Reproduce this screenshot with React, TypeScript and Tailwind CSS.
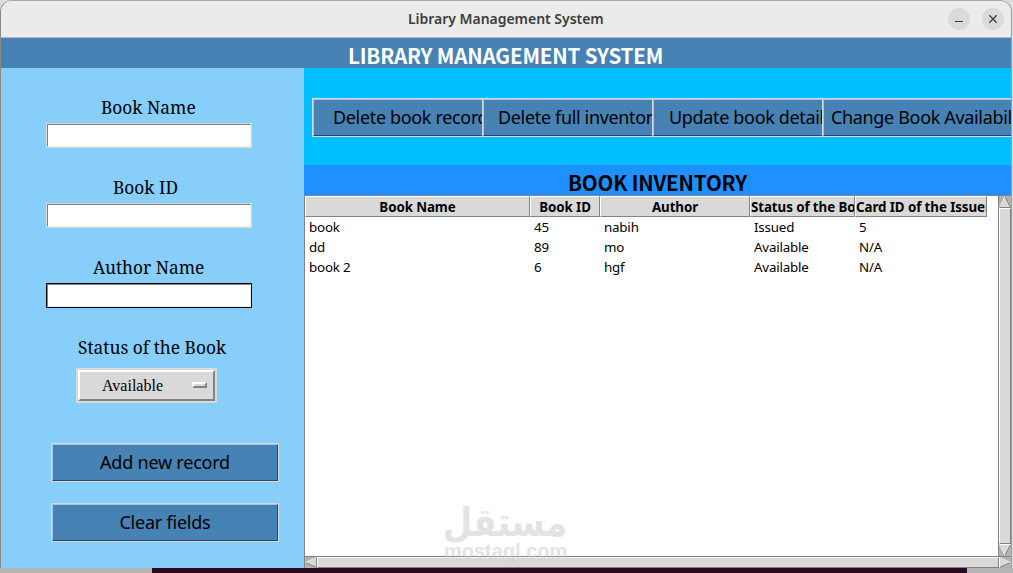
import clsx from 'clsx'

interface Book {
  name: string
  id: string
  author: string
  status: string
  card: string
}

const books: Book[] = [
  { name: 'book', id: '45', author: 'nabih', status: 'Issued', card: '5' },
  { name: 'dd', id: '89', author: 'mo', status: 'Available', card: 'N/A' },
  { name: 'book 2', id: '6', author: 'hgf', status: 'Available', card: 'N/A' },
]

const columns = 'grid grid-cols-[225px_70px_150px_105px_132px]'

function TitleBar() {
  return (
    <div className="flex h-[37px] shrink-0 items-center rounded-t-[11px] border-b border-[#b8b8b8] bg-[#ebebeb] pl-[407px] pr-[7px]">
      <span className="w-[196px] whitespace-nowrap font-['Noto_Sans'] text-[14px] font-semibold leading-5 tracking-[-0.03px] text-[#3d3d3d]">
        Library Management System
      </span>
      <div className="ml-auto flex gap-3">
        <button className="flex size-[22px] items-center justify-center rounded-full bg-[#dadada]">
          <svg width="22" height="22" viewBox="0 0 22 22">
            <path d="M7 13.5h8" stroke="#3d3d3d" fill="none" />
          </svg>
        </button>
        <button className="flex size-[22px] items-center justify-center rounded-full bg-[#dadada]">
          <svg width="22" height="22" viewBox="0 0 22 22">
            <path d="M7.3 7.3l7.4 7.4M14.7 7.3l-7.4 7.4" stroke="#3d3d3d" strokeWidth="1.3" fill="none" />
          </svg>
        </button>
      </div>
    </div>
  )
}

function FieldLabel({ text, className }: { text: string; className: string }) {
  return (
    <label
      className={clsx(
        "flex h-[26px] items-center whitespace-nowrap font-['Noto_Serif','DejaVu_Serif_Condensed','DejaVu_Serif',serif] text-[18.67px] text-black",
        className,
      )}
    >
      <span className="origin-left scale-x-[.93]">{text}</span>
    </label>
  )
}

function Entry({ focused = false }: { focused?: boolean }) {
  return (
    <div className={clsx('ml-[45px] h-[25px] w-[206px] border', focused ? 'border-black' : 'border-[#d9d9d9]')}>
      <input className="block h-full w-full border border-t-[#828282] border-l-[#828282] border-r-[#ececec] border-b-[#ececec] bg-white outline-none" />
    </div>
  )
}

function SideButton({ text }: { text: string }) {
  return (
    <button className="ml-[50px] block h-[39px] w-[228px] border border-[#d9d9d9]">
      <span className="flex h-full items-center justify-center border border-t-[#a5bef5] border-l-[#a5bef5] border-r-[#27486a] border-b-[#27486a] bg-[#4682b4] font-['Noto_Sans'] text-[18px] tracking-[-0.22px] text-black">
        {text}
      </span>
    </button>
  )
}

function Sidebar() {
  return (
    <div className="w-[303px] shrink-0 bg-[#87cefa] pt-[26px]">
      <FieldLabel text="Book Name" className="pl-[100px]" />
      <div className="mt-[3px]">
        <Entry />
      </div>
      <FieldLabel text="Book ID" className="mt-[26px] pl-[112px]" />
      <div className="mt-[3px]">
        <Entry />
      </div>
      <FieldLabel text="Author Name" className="mt-[26px] pl-[92px]" />
      <div className="mt-[3px]">
        <Entry focused />
      </div>
      <FieldLabel text="Status of the Book" className="mt-[26px] pl-[77px]" />

      <div className="mt-[8px] ml-[75px] h-[35px] w-[141px] border-2 border-[#d9d9d9]">
        <button className="flex h-full w-full items-center border-2 border-t-white border-l-white border-r-[#828282] border-b-[#828282] bg-[#d9d9d9] pl-[22px] font-['Liberation_Serif'] text-[16px] leading-5 text-black">
          <span>Available</span>
          <span className="mt-[-2px] mr-[6px] ml-auto h-[6px] w-[15px] border-2 border-t-white border-l-white border-r-[#828282] border-b-[#828282] bg-[#d9d9d9]" />
        </button>
      </div>

      <div className="mt-10">
        <SideButton text="Add new record" />
      </div>
      <div className="mt-[21px]">
        <SideButton text="Clear fields" />
      </div>
    </div>
  )
}

function ToolButton({ text, pad }: { text: string; pad: string }) {
  return (
    <button className="h-[39px] w-[170px] shrink-0 overflow-hidden border-y border-l border-[#d9d9d9]">
      <span
        className={clsx(
          "flex h-full items-center overflow-hidden whitespace-nowrap border-t border-b border-l border-t-[#a5bef5] border-l-[#a5bef5] border-b-[#27486a] bg-[#4682b4] font-['Noto_Sans'] text-[18px] tracking-[-0.34px] text-black",
          pad,
        )}
      >
        {text}
      </span>
    </button>
  )
}

function HeaderCell({ text, left = false }: { text: string; left?: boolean }) {
  return (
    <div
      className={clsx(
        'flex h-[21px] items-center overflow-hidden whitespace-nowrap border border-t-white border-l-white border-r-[#828282] border-b-[#828282] bg-[#d9d9d9] font-bold tracking-[-0.08px]',
        left ? 'justify-start' : 'justify-center',
      )}
    >
      {text}
    </div>
  )
}

function Arrow({ points, light }: { points: string; light: string }) {
  return (
    <svg width="12" height="12" viewBox="0 0 12 12" className="shrink-0 bg-[#b3b3b3]">
      <polygon points={points} fill="#d9d9d9" stroke="#828282" />
      <path d={light} stroke="#fff" fill="none" />
    </svg>
  )
}

function Inventory() {
  return (
    <div className="flex min-h-0 flex-1 flex-col border-t border-l border-[#828282] bg-white">
      <div className="flex min-h-0 flex-1">
        <div className="flex-1 overflow-hidden font-['Noto_Sans'] text-[13.33px] leading-5 text-black">
          <div className={columns}>
            <HeaderCell text="Book Name" />
            <HeaderCell text="Book ID" />
            <HeaderCell text="Author" />
            <HeaderCell text="Status of the Book" left />
            <HeaderCell text="Card ID of the Issuer" left />
          </div>
          {books.map((book) => (
            <div key={book.id} className={clsx(columns, 'h-5 tracking-[-0.18px] [&>span]:pl-1')}>
              <span>{book.name}</span>
              <span>{book.id}</span>
              <span>{book.author}</span>
              <span>{book.status}</span>
              <span>{book.card}</span>
            </div>
          ))}
        </div>
        {/* vertical scrollbar */}
        <div className="flex w-[13px] shrink-0 flex-col border-l border-[#828282] bg-[#b3b3b3]">
          <Arrow points="6,0.5 0.5,11.5 11.5,11.5" light="M6 .5L.5 11.5" />
          <div className="flex-1 border border-t-white border-l-white border-r-[#828282] border-b-[#828282] bg-[#d9d9d9]" />
          <Arrow points="0.5,0.5 11.5,0.5 6,11.5" light="M11.5 .5H.5L6 11.5" />
        </div>
      </div>
      {/* horizontal scrollbar */}
      <div className="flex h-[12px] shrink-0 border-t border-[#828282] bg-[#b3b3b3]">
        <Arrow points="0.5,5.5 11.5,0.5 11.5,10.5" light="M.5 5.5L11.5 .5" />
        <div className="flex-1 border border-t-white border-l-white border-r-[#828282] border-b-[#828282] bg-[#d9d9d9]" />
        <Arrow points="0.5,0.5 11.5,5.5 0.5,10.5" light="M.5 10.5V.5L11.5 5.5" />
      </div>
    </div>
  )
}

function Watermark() {
  return (
    <div className="pointer-events-none absolute top-[504px] left-[444px] flex w-[123px] flex-col whitespace-nowrap text-[#c8c8c8] opacity-50">
      <div dir="rtl" className="h-[37px] origin-right scale-x-[.85] font-['DejaVu_Sans'] text-[40px] font-bold leading-[37px]">
        مستقل
      </div>
      <div className="font-['Liberation_Sans'] text-[20px] font-bold leading-[20px]">mostaql.com</div>
    </div>
  )
}

export default function App() {
  return (
    <div className="relative flex h-[573px] w-[1013px] flex-col overflow-hidden bg-[#dedede]">
      <div className="flex h-[568px] w-[1012px] flex-col rounded-t-[12px] border-t border-r border-l border-t-[#a8a8a8] border-r-[#a09c98] border-l-[#8e8b87]">
        <TitleBar />
        <div className="flex h-[30px] shrink-0 items-center bg-[#4682b4] pt-[5px] pl-[347px]">
          <h1 className="whitespace-nowrap font-['Noto_Sans_CJK_JP',sans-serif] text-[20.6px] font-bold leading-[25px] tracking-[-0.17px] text-white">
            LIBRARY MANAGEMENT SYSTEM
          </h1>
        </div>
        <div className="flex min-h-0 flex-1">
          <Sidebar />
          <div className="flex min-w-0 flex-1 flex-col">
            <div className="flex h-[97px] shrink-0 overflow-hidden bg-[#00bfff] pt-[30px] pl-2">
              <ToolButton text="Delete book record" pad="pl-[19px]" />
              <ToolButton text="Delete full inventory" pad="pl-[14px]" />
              <ToolButton text="Update book details" pad="pl-[15px]" />
              <div className="flex w-[190px] shrink-0 [&>button]:w-full">
                <ToolButton text="Change Book Availability" pad="pl-[7px]" />
              </div>
            </div>
            <div className="flex h-[30px] shrink-0 items-center justify-center bg-[#1e90ff] pt-[5px]">
              <h2 className="whitespace-nowrap font-['Noto_Sans_CJK_JP',sans-serif] text-[20.6px] font-bold leading-[25px] tracking-[-0.17px] text-black">
                BOOK INVENTORY
              </h2>
            </div>
            <Inventory />
          </div>
        </div>
      </div>
      <div className="flex h-[5px] bg-[#b5b5b5] pl-[152px]">
        <div className="w-[815px] bg-[#2c0720]" />
      </div>
      <Watermark />
    </div>
  )
}
